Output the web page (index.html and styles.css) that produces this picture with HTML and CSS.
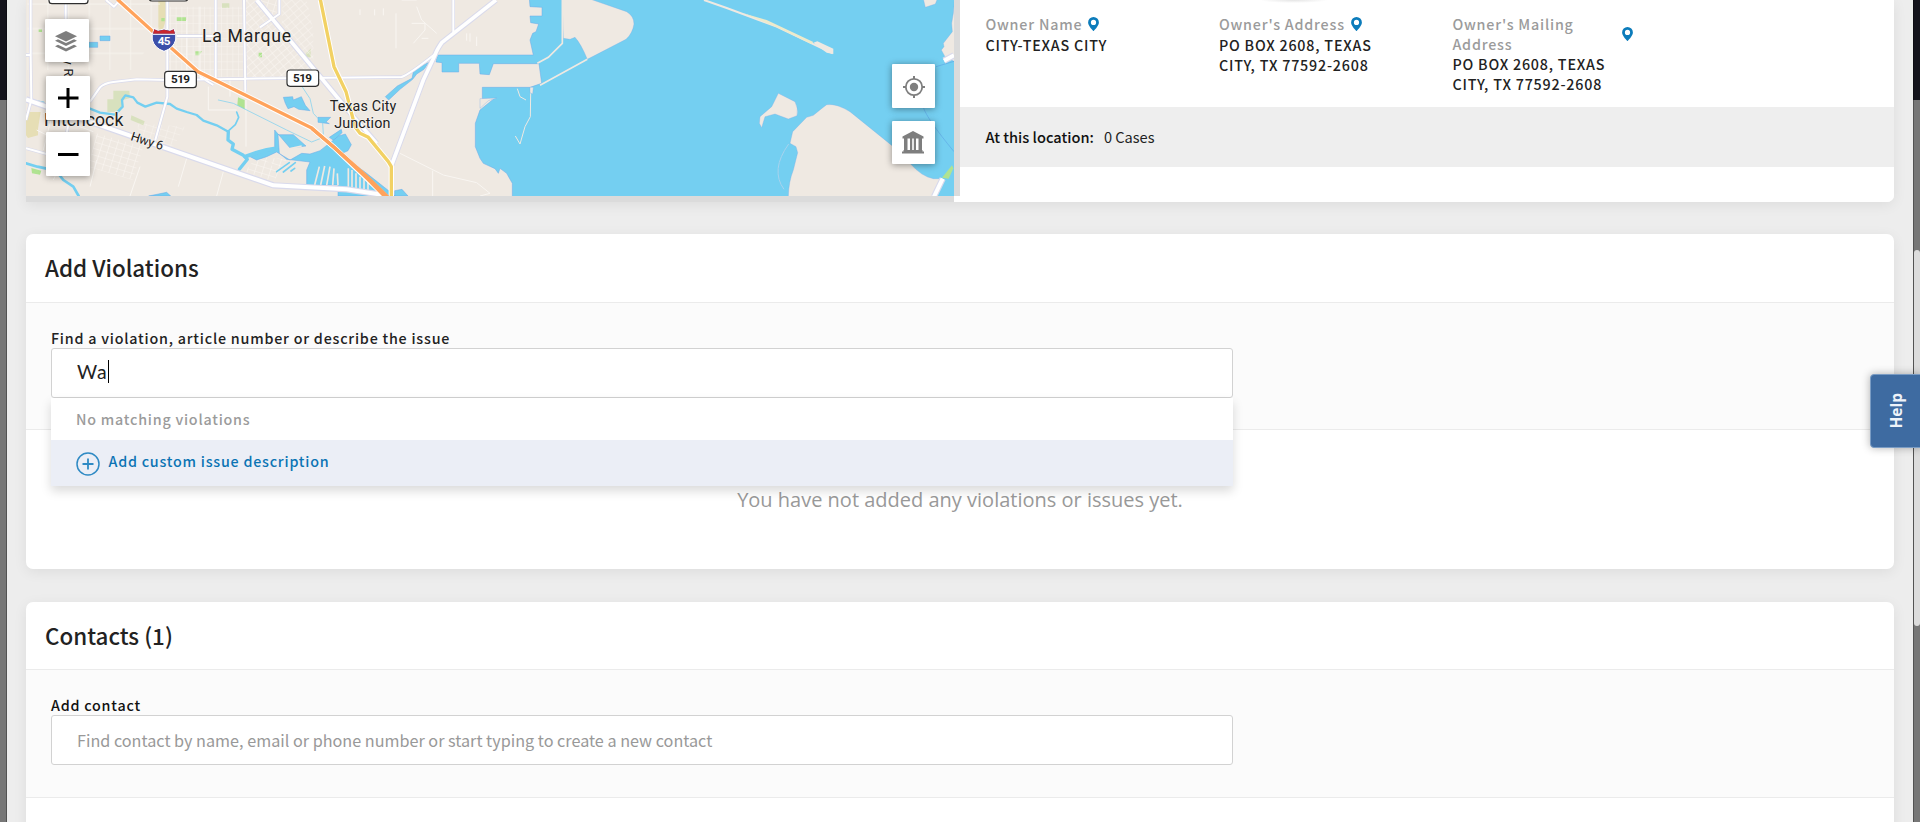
FILE: index.html
```
<!DOCTYPE html>
<html lang="en">
<head>
<meta charset="utf-8">
<title>New case</title>
<link rel="stylesheet" href="styles.css">
</head>
<body>
<main class="modal">
  <section class="card location">
    <div class="map">
      <svg class="map-canvas" viewBox="78 0 2784 588" preserveAspectRatio="none">
        <defs>
          <pattern id="grid" width="17" height="23" patternUnits="userSpaceOnUse"><path d="M0 0H17M0 0V23" stroke="#fbf8f4" stroke-width="3" fill="none"/></pattern>
          <pattern id="gridSkew" width="17" height="21" patternUnits="userSpaceOnUse" patternTransform="rotate(50)"><path d="M0 0H17M0 0V21" stroke="#fbf8f4" stroke-width="3" fill="none"/></pattern>
          <pattern id="gridTilt" width="22" height="19" patternUnits="userSpaceOnUse" patternTransform="rotate(17)"><path d="M0 0H22M0 0V19" stroke="#fbf8f4" stroke-width="3" fill="none"/></pattern>
          <pattern id="gridWide" width="62" height="74" patternUnits="userSpaceOnUse"><path d="M0 12H62M20 0V74" stroke="#f8f5f0" stroke-width="2.5" fill="none"/></pattern>
        </defs>
        <rect x="78" width="2784" height="588" fill="#efe9e2"/>

        <!-- parks -->
        <path d="M475 0h22v62l-10 32h-12zM78 336h44l-8 50 0 20-30 8-6-8z" fill="#e6deb5"/>
        <path d="M340 272l48 0 2 22-20 6-10 36h-38v-38h18zM394 346l40 18-4 12-38-16zM666 10h22v14h-22zM918 160l14-14v26h-20z" fill="#d8e1be"/>
        <path d="M530 52h28v11h-28zM484 54h10v10h-10zM586 154h20l-8 12h-12zM776 158h10v14h-10zM714 292l20 8v28l-22-12zM94 504l30 8-4 12-24-4zM116 88h10v8h-10z" fill="#b0e391"/>

        <!-- local streets -->
        <path d="M82 0H480V80L400 210H82z" fill="url(#gridWide)"/>
        <path d="M505 20H730V232H505z" fill="url(#grid)" opacity=".75"/>
        <path d="M735 0H768L840 70 930 186V232H735z" fill="url(#gridSkew)"/>
        <path d="M780 0H830V40L815 55z" fill="url(#gridTilt)"/>
        <path d="M848 0H920L940 90V190L845 70z" fill="url(#gridSkew)" opacity=".85"/>
        <path d="M290 400L430 440 398 540 265 500z" fill="url(#gridTilt)"/>
        <path d="M410 370L555 380 520 440 420 410z" fill="url(#gridTilt)" opacity=".7"/>
        <path d="M770 470L862 478 820 545 735 515z" fill="url(#gridTilt)"/>
        <g fill="none" stroke="#f9f6f2" stroke-width="3">
          <path d="M130 340L280 395M110 390L270 470M160 330L130 450M210 430L160 540M290 480L270 560M420 500L390 588M560 475L535 560M670 515L650 588M625 260V330H710M690 240V290M738 300V440M560 60V230M600 20V235"/>
          <path d="M1080 28V45M1124 28V46M1150 25V46M1188 40V145M1205 0H1250M1250 20L1265 60 1310 100M1235 70H1275V90L1240 130M1265 115H1285M1400 100V122M1410 100V125M1430 110V138M1200 460L1330 525 1430 548 1470 580 1440 588M1298 512V588"/>
        </g>

        <!-- water -->
        <g fill="#74cff1" stroke="#6ba9e8" stroke-width="1.5" stroke-linejoin="round">
          <path d="M1588 -4L1590 20 1626 22V48H1590L1592 68 1616 72 1608 95 1598 100 1590 120 1600 165H1312L1308 186 1326 188V216H1376V190H1438L1440 222 1468 224 1480 191H1617L1625 250 1590 262H1447V296H1482L1440 330 1426 370V440L1440 475 1450 490 1485 506 1495 520 1500 505 1520 520 1537 550V592H2866V-4z"/>
          <path d="M300 108h30v14h-30zM262 127h31v15h-31z"/>
          <path d="M850 292l28-2 2 10 24-10 12 26 14 16-34-4-14-8-18 6-8-16zM954 352h38l-14 14 10 5-34-4z"/>
          <path d="M1156 290L1192 258 1236 235 1240 216 1262 200 1288 186 1272 208 1250 222 1238 238 1200 268 1166 300zM988 412L1024 388 1026 398 1002 422z"/>
          <path d="M824 390V450L790 455 750 470 770 480 800 470 830 456 870 480 905 460 930 462 960 452 1016 408 1036 402 1054 434 1044 452 1022 462 1100 520 1186 588H1014V555H920V510L930 486 860 478 838 460 834 404 880 404 918 438 870 444z"/>
          <path d="M446 588L500 577 512 588zM1184 588V572L1206 568 1224 588z"/>
        </g>
        <g fill="none" stroke="#74cff1" stroke-width="7" stroke-linecap="round" stroke-linejoin="round">
          <path d="M78 298L130 308M270 326L300 338 345 344 368 320 366 300 376 286 400 292 412 308 436 320 470 308 510 312 530 326 560 336 590 345 610 362 650 376 685 395"/>
          <path d="M710 336L716 352 706 374 686 392" stroke-width="5"/>
          <path d="M685 395L684 420 700 432 696 448 730 466 742 478 718 508" stroke-width="10"/>
          <path d="M736 470L770 458 800 450 822 446" stroke-width="12"/>
          <path d="M78 490L112 500 168 512 190 540 220 560 236 588" stroke-width="8"/>
          <path d="M655 300L700 310 860 390 935 426 960 416 970 402 968 370 940 340 930 296 905 258" stroke-width="2"/>
          <path d="M830 515L868 488M850 516L886 488M873 513L884 505" stroke-width="5"/>
        </g>
        <g fill="none" stroke="#efe9e2" stroke-width="5">
          <path d="M958 500L944 555M974 498L962 555M990 500L980 556M1002 505L998 556M1012 520L1014 556M1045 505V560M1056 510V562M1068 520V565M1080 530V570M1092 538V574M1104 545V578" />
          <path d="M860 448L905 438M800 478L822 500"/>
        </g>

        <!-- islands and levees -->
        <g fill="#efe9e2" stroke="#79a9e6" stroke-width="1">
          <path d="M1686 -3L1770 -3 1880 35Q1902 48 1902 72 1898 100 1878 118L1762 178Q1742 130 1725 112L1710 118 1690 115z"/>
          <path d="M2335 280L2385 305Q2396 325 2391 347L2365 357 2325 342 2295 350 2285 383 2278 370 2280 350 2315 320z"/>
          <path d="M2365 590Q2366 545 2380 510L2393 458 2388 440 2370 430 2378 395 2420 352 2440 346Q2465 325 2480 314 2510 310 2550 335L2680 440 2730 490Q2765 530 2800 536H2828L2804 590z"/>
          <path d="M2864 -3L2860 40 2855 70 2857 95 2830 130 2832 140 2824 150 2835 170 2864 185zM2770 -3H2812L2806 12 2776 22z"/>
          <path d="M1590 262V278L1598 282 1600 262zM1440 325V296L1490 294 1465 302z"/>
        </g>
        <g fill="none" stroke="#efe9e2">
          <path d="M1687 0V130L1645 172 1612 190M1762 178L1620 256" stroke-width="5"/>
          <path d="M1592 280L1591 350 1575 380 1560 432 1546 408M1552 266L1560 290 1578 300" stroke-width="3"/>
          <path d="M2112 0L2180 24 2330 80 2498 160" stroke-width="6"/>
          <path d="M2366 432Q2310 510 2352 568" stroke="#a7d3ee" stroke-width="3"/>
        </g>
        <path d="M2440 128L2452 124 2500 146 2500 162 2480 158z" fill="#efe9e2"/>
        <path d="M2230 40L2300 60 2440 126 2434 132 2330 82z" fill="#edeacb"/>
        <path d="M2770 322Q2780 355 2862 455M2808 200L2862 184" fill="none" stroke="#5fa8e6" stroke-width="2"/>
        <path d="M2856 496L2860 505 2846 536 2826 533z" fill="#b0e391"/>

        <!-- road casings -->
        <g fill="none" stroke="#d9daec" stroke-linejoin="round">
          <path d="M92 0V165L94 300 78 360M78 165H92M197 0V90M318 0L342 20 360 0M270 305L300 262Q312 250 340 246L410 238 500 240 735 236 1205 231Q1230 222 1305 162M502 0V290L466 420M530 108H640M647 0V235M732 0L736 275M780 82L838 42V0M600 230L640 255M1360 0V100M78 445L140 462M210 345L200 400" stroke-width="10"/>
          <path d="M770 0L1060 350 1130 430M1488 0L1325 128Q1310 150 1305 165L1270 240 1175 495" stroke-width="17"/>
          <path d="M78 298L140 320 820 556 1040 568 1150 585M2802 590L2828 536M2832 182L2862 166" stroke-width="19"/>
        </g>
        <g fill="none" stroke="#fff" stroke-linejoin="round">
          <path d="M92 0V165L94 300 78 360M78 165H92M197 0V90M318 0L342 20 360 0M270 305L300 262Q312 250 340 246L410 238 500 240 735 236 1205 231Q1230 222 1305 162M502 0V290L466 420M530 108H640M647 0V235M732 0L736 275M780 82L838 42V0M600 230L640 255M1360 0V100M78 445L140 462M210 345L200 400" stroke-width="6"/>
          <path d="M770 0L1060 350 1130 430M1488 0L1325 128Q1310 150 1305 165L1270 240 1175 495" stroke-width="11"/>
          <path d="M78 298L140 320 820 556 1040 568 1150 585M2802 590L2828 536M2832 182L2862 166" stroke-width="12"/>
          <path d="M961 0L1002 200 1038 275 1065 380 1080 400 1105 412 1165 485 1174 500V592M354 0L470 105 594 215 640 238 935 384 1000 440 1168 600" stroke-width="16"/>
        </g>
        <path d="M961 -2L1002 200 1038 275 1065 380 1080 400 1105 412 1165 485 1174 500V592" fill="none" stroke="#f2d163" stroke-width="10" stroke-linejoin="round"/>
        <path d="M352 -2L470 105 594 215 640 238 935 384 1000 440 1100 532" fill="none" stroke="#ffa35c" stroke-width="10" stroke-linejoin="round"/>
        <path d="M935 379L1003 436 1104 526 1168 588H1146L1096 537 1000 446 932 389z" fill="#ffa35c"/>

        <!-- route shields -->
        <g fill="#fff" stroke="#2e2e2e" stroke-width="3.5">
          <rect x="147" y="-38" width="117" height="49" rx="9"/>
          <rect x="447" y="-46" width="117" height="49" rx="9"/>
          <rect x="494" y="214" width="95" height="49" rx="9"/>
          <rect x="861" y="210" width="95" height="49" rx="9"/>
        </g>
        <path d="M462 86L474 91 492 87 510 91 522 86Q530 105 527 120 520 145 492 154 464 145 457 120 454 105 462 86z" fill="#3c4faa" stroke="#fff" stroke-width="3"/>
        <path d="M463 88L474 93 492 89 510 93 521 88 525 101H459z" fill="#c8262e"/>
        <path d="M458 103H526" stroke="#fff" stroke-width="3"/>

        <g class="map-text">
          <text class="shield-text light" x="473" y="136" textLength="38">45</text>
          <text class="shield-text" x="513" y="250" textLength="57">519</text>
          <text class="shield-text" x="879" y="246" textLength="57">519</text>
          <text class="town" x="606" y="125" textLength="267">La Marque</text>
          <text class="town" x="132" y="378" textLength="238">Hitchcock</text>
          <text class="place" x="989" y="332" textLength="200">Texas City</text>
          <text class="place" x="1003" y="384" textLength="168">Junction</text>
          <text class="street" transform="translate(390 420) rotate(18)" textLength="100">Hwy 6</text>
          <text class="street" transform="translate(191 118) rotate(90)" textLength="111">Hwy R</text>
        </g>
      </svg>

      <button class="map-btn layers" aria-label="Layers">
        <svg viewBox="0 0 24 24" width="24" height="24" fill="#7e7e7e"><path d="M12 2L23 7.200 12 12.400 1 7.200z"/><path d="M4 10.300L12 14 20 10.300 23 11.800 12 17 1 11.800z"/><path d="M4 15.700L12 19.400 20 15.700 23 17.200 12 22.400 1 17.200z"/></svg>
      </button>
      <button class="map-btn zoom-in" aria-label="Zoom in">
        <svg viewBox="0 0 22 22" width="22" height="22"><path d="M1 11H21.500M11 1V21" stroke="#000" stroke-width="3"/></svg>
      </button>
      <button class="map-btn zoom-out" aria-label="Zoom out">
        <svg viewBox="0 0 22 22" width="22" height="22"><path d="M1 11.500H21.500" stroke="#000" stroke-width="3"/></svg>
      </button>
      <button class="map-btn locate" aria-label="Locate">
        <svg viewBox="0 0 24 24" width="24" height="24"><circle cx="12" cy="12" r="4.200" fill="#7e7e7e"/><path d="M12 1V4M12 20V23M1 12H4M20 12H23" stroke="#7e7e7e" stroke-width="2"/><circle cx="12" cy="12" r="8.200" fill="none" stroke="#7e7e7e" stroke-width="1.800"/></svg>
      </button>
      <button class="map-btn parcel" aria-label="Parcels">
        <svg viewBox="0 0 24 24" width="24" height="24" fill="#7e7e7e"><path d="M12 0L22.500 5.500V7.500H1.500V5.500zM3 7H6.500V20H3zM9 7H11.200V20H9zM12.800 7H15V20H12.800zM17.500 7H21V20H17.500zM2.500 19H21.500V20.500H23V22.500H1V20.500H2.500z"/></svg>
      </button>
    </div>

    <div class="details">
      <dl class="owner">
        <div class="field">
          <dt><span>Owner Name</span><svg class="pin" viewBox="0 0 11 14"><path d="M5.500 0A5.400 5.400 0 0 0 .1 5.400C.1 9 5.500 14 5.500 14S10.900 9 10.900 5.400A5.400 5.400 0 0 0 5.500 0zm0 8a2.600 2.600 0 1 1 0-5.200 2.600 2.600 0 0 1 0 5.200z"/></svg></dt>
          <dd>CITY-TEXAS CITY</dd>
        </div>
        <div class="field">
          <dt><span>Owner's Address</span><svg class="pin" viewBox="0 0 11 14"><path d="M5.500 0A5.400 5.400 0 0 0 .1 5.400C.1 9 5.500 14 5.500 14S10.900 9 10.900 5.400A5.400 5.400 0 0 0 5.500 0zm0 8a2.600 2.600 0 1 1 0-5.200 2.600 2.600 0 0 1 0 5.200z"/></svg></dt>
          <dd>PO BOX 2608, TEXAS<br>CITY, TX 77592-2608</dd>
        </div>
        <div class="field mailing">
          <dt><span>Owner's Mailing<br>Address</span><svg class="pin" viewBox="0 0 11 14"><path d="M5.500 0A5.400 5.400 0 0 0 .1 5.400C.1 9 5.500 14 5.500 14S10.900 9 10.900 5.400A5.400 5.400 0 0 0 5.500 0zm0 8a2.600 2.600 0 1 1 0-5.200 2.600 2.600 0 0 1 0 5.200z"/></svg></dt>
          <dd>PO BOX 2608, TEXAS<br>CITY, TX 77592-2608</dd>
        </div>
      </dl>
      <div class="cases"><strong>At this location:</strong><span>0 Cases</span></div>
    </div>
  </section>

  <section class="card violations">
    <h2>Add Violations</h2>
    <div class="search">
      <label>Find a violation, article number or describe the issue</label>
      <div class="input typed">Wa<i class="caret"></i></div>
      <div class="dropdown">
        <div class="empty">No matching violations</div>
        <div class="custom">
          <svg viewBox="0 0 24 24" width="24" height="24" fill="none" stroke="#2f8ac4" stroke-width="1.500"><circle cx="12" cy="12" r="11"/><path d="M6.500 12H17.500M12 6.500V17.500" stroke-width="1.800"/></svg>
          <span>Add custom issue description</span>
        </div>
      </div>
    </div>
    <p class="none">You have not added any violations or issues yet.</p>
  </section>

  <section class="card contacts">
    <h2>Contacts (1)</h2>
    <div class="search">
      <label class="plain">Add contact</label>
      <div class="input hint">Find contact by name, email or phone number or start typing to create a new contact</div>
    </div>
  </section>
</main>
<div class="scroll-thumb"></div>
<div class="help"><span>Help</span></div>
</body>
</html>
```

FILE: styles.css
```
* { box-sizing: border-box; }
html { overflow: hidden; }
body {
  margin: 0;
  height: 822px;
  overflow: hidden;
  position: relative;
  background: linear-gradient(#15141d 100px, #777 100px);
  font-family: "Noto Sans CJK SC", "Noto Sans", sans-serif;
  font-size: 14.3px;
  color: #222;
}
.modal {
  height: 822px;
  overflow: hidden;
  margin: 0 7px;
  padding: 0 19px;
  background: #ededed;
  box-shadow: 0 0 0 1px rgba(0, 0, 0, .3);
}
.card {
  background: #fff;
  border-radius: 7px;
  box-shadow: 0 3px 14px rgba(0, 0, 0, .07);
  margin-bottom: 33px;
}
.location {
  display: flex;
  height: 202px;
  margin-bottom: 32px;
  border-radius: 0 0 7px 0;
}
.map {
  position: relative;
  width: 934px;
  height: 196px;
  flex: none;
  border-right: 6px solid #dbdbdb;
}
.map::after {
  content: "";
  position: absolute;
  left: 0;
  right: 0;
  top: 196px;
  height: 6px;
  background: #dbdbdb;
}
.map-canvas { display: block; width: 928px; height: 196px; }
.map-text { font-family: Roboto, sans-serif; fill: #222; stroke: #f5f1ec; stroke-width: 5; paint-order: stroke; stroke-linejoin: round; }
.town { font-size: 53px; }
.place { font-size: 43px; }
.street { font-size: 38px; }
.shield-text { font-size: 35px; font-weight: 700; stroke: none; }
.light { fill: #fff; }
.map-btn {
  position: absolute;
  display: grid;
  place-items: center;
  padding: 0;
  border: 0;
  border-radius: 1px;
  width: 44px;
  height: 44px;
  background: #fff;
  box-shadow: 0 1px 7px rgba(0, 0, 0, .4);
}
.layers { left: 19px; top: 19px; height: 43px; padding-right: 2px; }
.zoom-in { left: 20px; top: 76px; }
.zoom-out { left: 20px; top: 132px; }
.locate { left: 866px; top: 64px; width: 43px; padding-top: 2px; }
.parcel { left: 866px; top: 121px; width: 43px; height: 43px; padding-right: 1px; }

.details {
  flex: 1;
  background: radial-gradient(ellipse 34px 3px at 334px 0, #e4e4e4, #fff) no-repeat;
  border-radius: 0 0 7px 0;
}
.owner {
  margin: 0;
  height: 107px;
  padding: 14px 0 0 25.400px;
  display: grid;
  grid-template-columns: 233.500px 233.500px 233.500px;
  line-height: 20px;
  letter-spacing: .8px;
  font-weight: 500;
}
.field dt { display: flex; align-items: center; gap: 6px; color: #9b9b9b; }
.field dd { margin: 1px 0 0; }
.pin { width: 11px; height: 14px; fill: #0c7cbb; }
.mailing dt span { width: 164px; }
.mailing dd { margin-top: 0; }
.cases {
  height: 60px;
  padding: 0 0 2px 25.400px;
  display: flex;
  align-items: center;
  gap: 10px;
  background: #eee;
  font-size: 14.600px;
}
.cases strong { font-weight: 500; color: #111; }

h2 {
  margin: 0;
  height: 68px;
  padding: 0 0 0 19px;
  line-height: 66px;
  font-size: 22.400px;
  font-weight: 500;
}
.search {
  position: relative;
  height: 128px;
  padding: 25px 25px 0;
  background: #fbfbfb;
  border-top: 1px solid #ebebeb;
  border-bottom: 1px solid #ebebeb;
}
label {
  display: block;
  height: 20px;
  line-height: 20px;
  font-weight: 500;
  letter-spacing: .78px;
}
.contacts h2 { height: 67px; }
.contacts .search { height: 129px; }
.plain { color: #111; }
.input {
  width: 1182px;
  height: 50px;
  padding-left: 25px;
  display: flex;
  align-items: center;
  background: #fff;
  border: 1px solid #d2d2d2;
  border-radius: 3px;
}
.typed { font-family: Lato, sans-serif; font-size: 19.500px; letter-spacing: .9px; padding-bottom: 3px; }
.caret { width: 1px; height: 23px; background: #000; }
.hint { font-size: 16.200px; color: #999; }
.dropdown {
  position: absolute;
  z-index: 2;
  left: 25px;
  top: 95px;
  width: 1182px;
  background: #fff;
  box-shadow: 0 5px 10px rgba(0, 0, 0, .15);
  letter-spacing: .77px;
  font-weight: 500;
}
.empty { height: 42px; line-height: 41px; padding-left: 25px; color: #9b9b9b; }
.custom {
  height: 46px;
  padding: 1px 0 0 25px;
  display: flex;
  align-items: center;
  gap: 8.500px;
  background: #ebeef6;
  color: #0b74b4;
}
.custom span { margin-top: -6px; }
.violations { height: 335px; }
.none {
  margin: 0;
  padding-top: 56px;
  text-align: center;
  font: 20px/28px "Open Sans", sans-serif;
  color: #999;
}
.contacts { height: 260px; }
.scroll-thumb {
  position: absolute;
  left: 1914px;
  top: 250px;
  width: 6px;
  height: 376px;
  border-radius: 3px;
  background: #dcdcdc;
}
.help {
  position: absolute;
  left: 1870px;
  top: 374px;
  width: 52px;
  height: 74px;
  display: grid;
  place-items: center;
  padding-right: 1px;
  background: #3e6ba1;
  border: 1px solid #7a9cc4;
  border-radius: 4px 0 0 4px;
  box-shadow: 0 0 8px rgba(0, 0, 0, .3);
  color: #eef3f9;
  font: 700 15.500px/20px "Open Sans", sans-serif;
}
.help span { writing-mode: vertical-rl; transform: rotate(180deg); }
```
